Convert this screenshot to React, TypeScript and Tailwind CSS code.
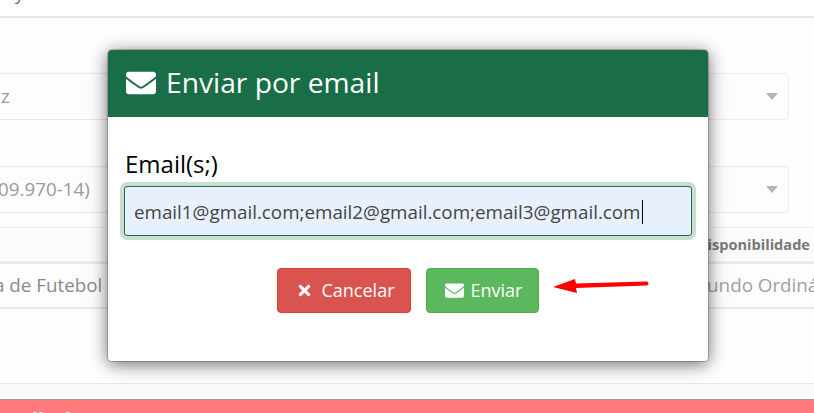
import { FaEnvelope, FaTimes } from "react-icons/fa";

function RightSelect() {
  return (
    <div className="flex h-[47px] w-[300px] items-center justify-end rounded border border-[#eaecee] bg-[#fdfdfd] pr-[10px]">
      <div className="h-0 w-0 border-x-[6px] border-t-[7px] border-x-transparent border-t-[#b5b5b5]" />
    </div>
  );
}

function ModalEmail() {
  return (
    <div className="absolute left-[108px] top-[50px] h-[311px] w-[600px] overflow-hidden rounded bg-white shadow-[0_3px_18px_rgba(0,0,0,0.6)] ring-1 ring-black/20">
      <div className="flex h-[67px] items-center gap-[11px] bg-[#1a6e47] pb-[2px] pl-[18px] text-[28.2px] text-white">
        <FaEnvelope className="h-[30px] w-[30px]" />
        <span className="-ml-px">Enviar por email</span>
      </div>
      <div className="px-[16px] pt-[32px]">
        <div className="ml-px text-[24px] leading-[30px] text-black">Email(s;)</div>
        <div className="mt-[7px] flex h-[50px] items-center rounded-[3px] border border-[#1a6e47] bg-[#e8f0fe] pl-[9px] pt-[2px] text-[18.8px] text-[#444] shadow-[0_0_0_4px_#c9dfd3]">
          <span>email1@gmail.com;email2@gmail.com;email3@gmail.com</span>
          <span className="ml-px h-[24px] w-px bg-black" />
        </div>
        <div className="mt-[32px] flex gap-[15px] pl-[153px]">
          <button className="flex h-[45px] w-[134px] items-center justify-center gap-[8px] rounded border border-[#d43f3a] bg-[#d9534f] pl-[3px] text-[18px] text-white">
            <FaTimes className="h-[17px] w-[17px]" />
            Cancelar
          </button>
          <button className="flex h-[45px] w-[113px] items-center justify-center gap-[7px] rounded border border-[#4cae4c] bg-[#5cb85c] pl-[2px] text-[18px] text-white">
            <FaEnvelope className="h-[19px] w-[19px]" />
            Enviar
          </button>
        </div>
      </div>
    </div>
  );
}

export default function App() {
  return (
    <div className="relative h-[413px] w-[814px] overflow-hidden bg-[#fafafa] font-['Open_Sans',sans-serif]">
      <div className="h-[18px] overflow-hidden border-b-2 border-[#e4e6e8] bg-white pl-[15px] text-[18px] leading-[0px] text-[#666]">
        <span className="relative -top-[7px]">y</span>
      </div>
      <div className="h-[366px] border-b border-[#e4e6e8] bg-[#fefefe]">
        <div className="flex justify-between pr-[25px] pt-[55px]">
          <div className="-ml-px flex h-[47px] w-[110px] items-center border border-[#e6e8ea] bg-[#fdfdfd] text-[18.8px] text-[#9a9a9a]">
            <span className="pl-px">z</span>
          </div>
          <RightSelect />
        </div>
        <div className="flex justify-between pr-[25px] pt-[46px]">
          <div className="-ml-px flex h-[47px] w-[110px] items-center border border-[#e6e8ea] bg-[#fdfdfd] text-[18.8px] text-[#9a9a9a]">
            <span className="-ml-[2px] whitespace-nowrap">09.970-14)</span>
          </div>
          <RightSelect />
        </div>
        <div className="mt-[14px] flex h-[35px] items-center justify-end border-y border-[#efefef] bg-[#fcfcfc] pr-[4px] text-[14.6px] font-bold text-[#777]">
          Disponibilidade
        </div>
        <div className="flex h-[47px] items-center justify-between overflow-hidden whitespace-nowrap border-y-2 border-[#e8e8e8] bg-[#fdfdfd] text-[18.8px] text-[#a0a0a0]">
          <span className="-ml-[6px] text-[#8a8a8a]">a de Futebol</span>
          <span className="-mr-[28px]">Fundo Ordinário</span>
        </div>
      </div>
      <div className="h-[15px]" />
      <div className="h-[14px] overflow-hidden border-t border-[#8fa88f] bg-[#ff7a7a] pl-[14px] text-[20px] font-bold leading-[40px] text-white">
        Edital
      </div>
      <ModalEmail />
      <svg className="absolute left-[552px] top-[278px]" width="100" height="18" viewBox="0 0 100 18">
        <path d="M1 9 L23 1 L24 5.5 L95 3.5 Q98 5.5 95 7.5 L24 10 L25 15 Z" fill="#ff0000" />
      </svg>
    </div>
  );
}
